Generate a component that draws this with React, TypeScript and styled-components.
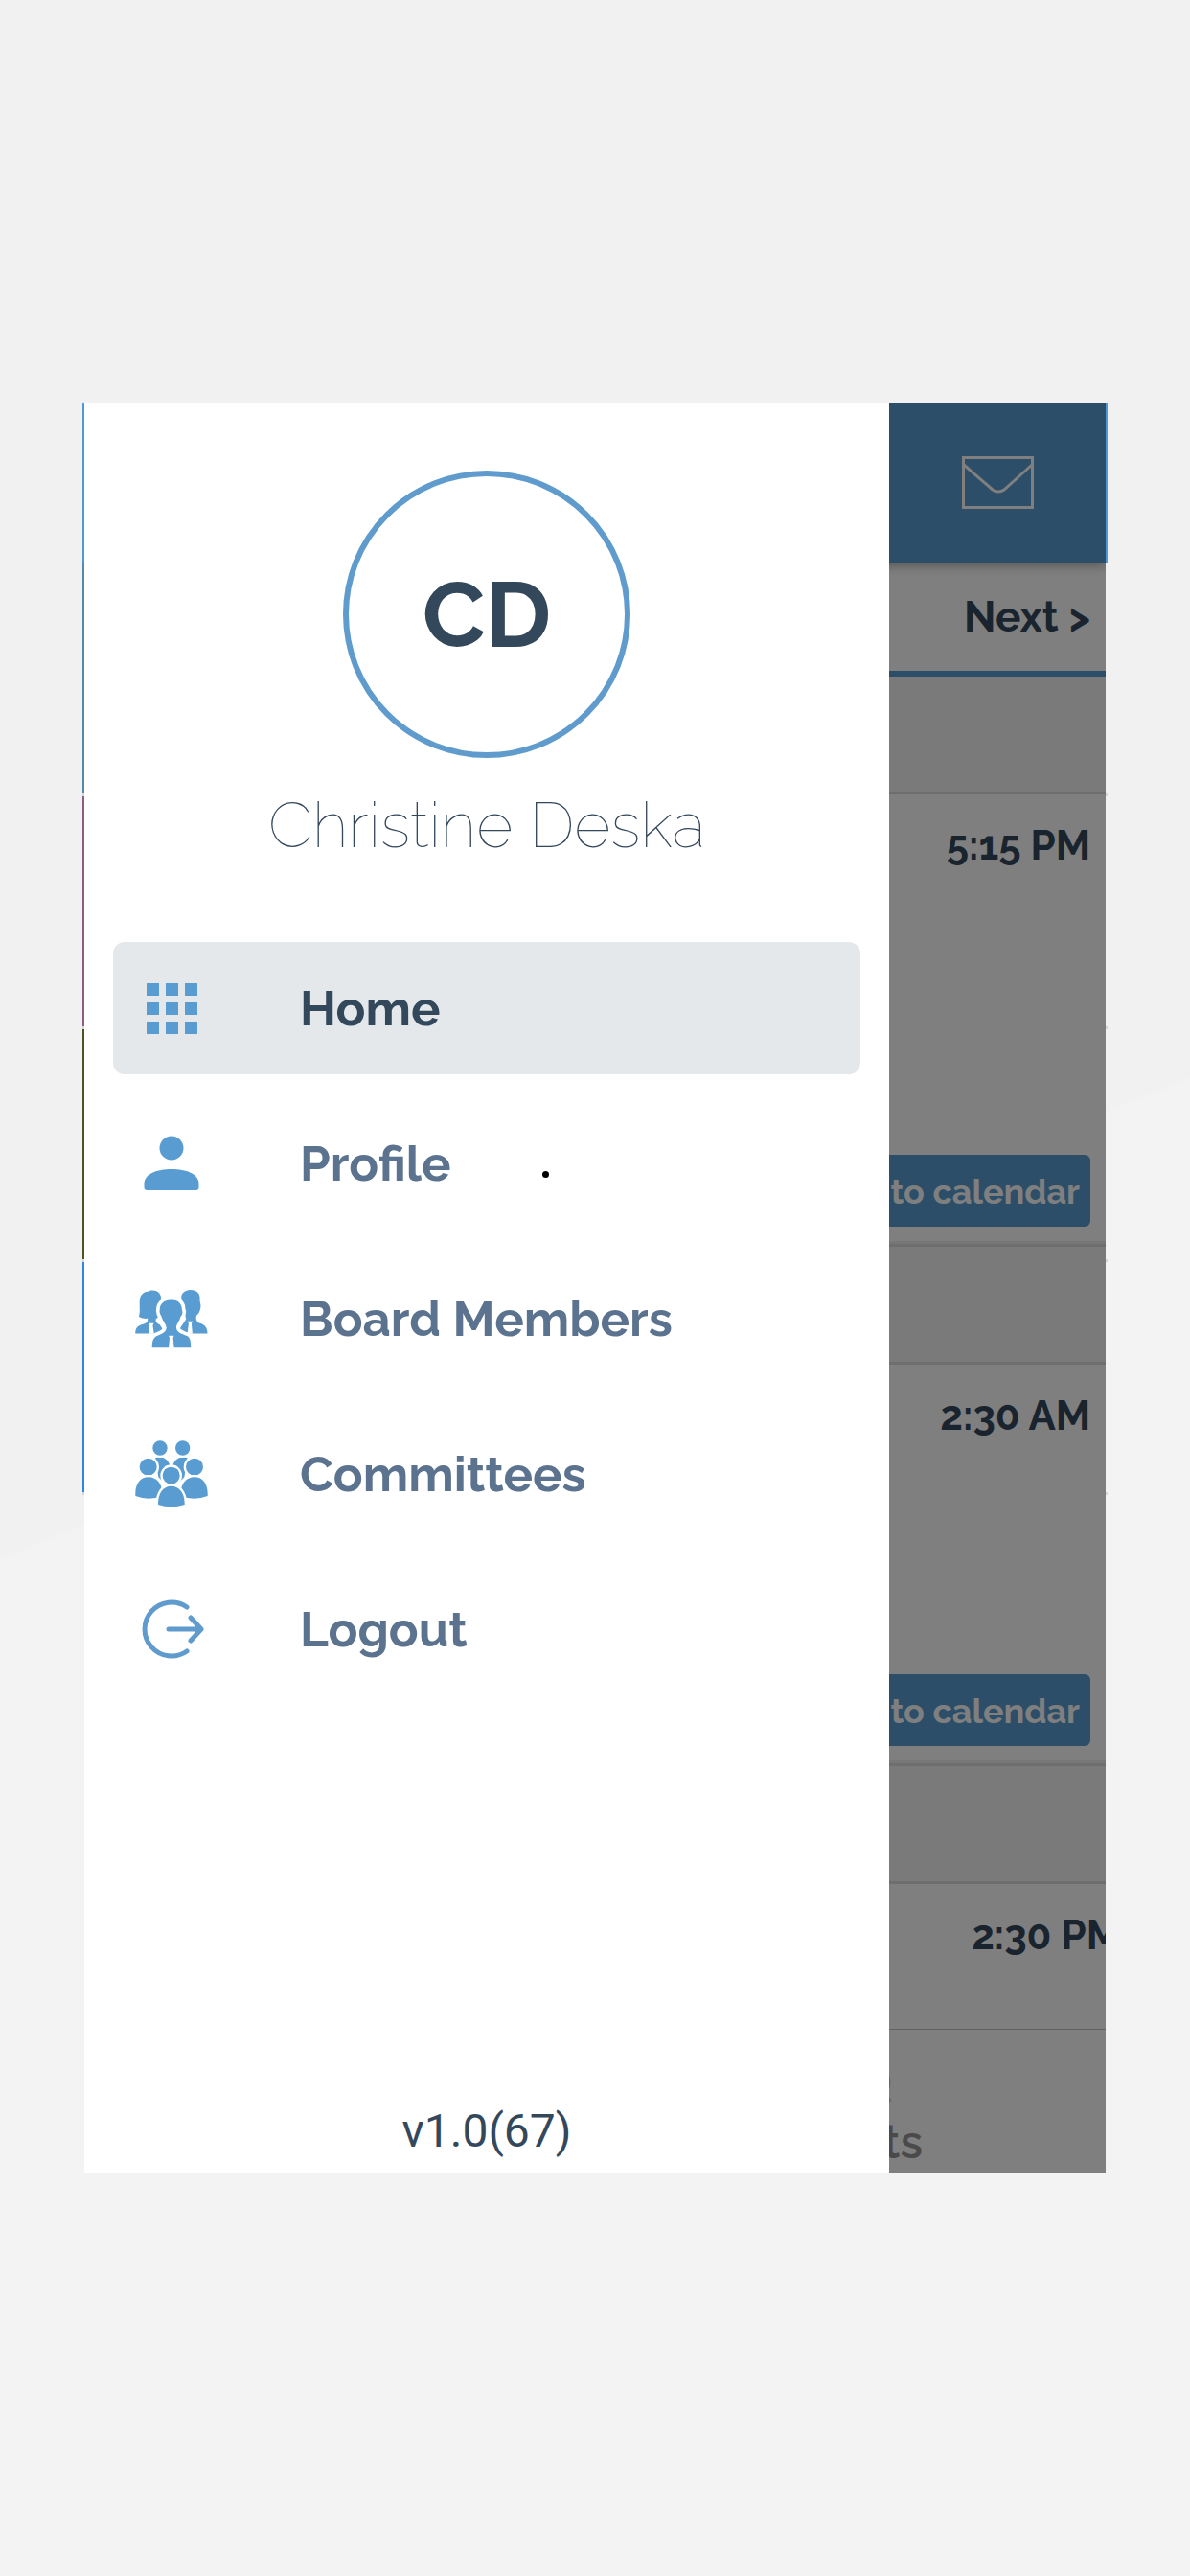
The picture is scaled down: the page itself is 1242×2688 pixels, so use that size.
import React from 'react';
import styled, { createGlobalStyle } from 'styled-components';

const blue = '#589cd2';
const ink = '#34485c';
const slate = '#5b738e';

const GlobalStyle = createGlobalStyle`
  *, *::before, *::after { box-sizing: border-box; }
  body {
    margin: 0;
    background: #f1f1f1;
    font-family: Raleway, Lato, "Open Sans", sans-serif;
    color: ${ink};
  }
  button { font-family: inherit; border: 0; cursor: pointer; }
`;

const Page = styled.main`
  min-height: 100vh;
  padding: 420px 86px;
  background: linear-gradient(158deg, #f1f1f1 51%, #f3f3f3 51%);
`;

const Stage = styled.div`
  position: relative;
  padding: 1px 2px 0;
`;

const Backdrop = styled.div`
  position: absolute;
  inset: 0;
`;

const BackdropHeader = styled.div`
  height: 168px;
  background: #4f99d6;
`;

const BackdropRow = styled.div<{ $accent: string }>`
  height: 243px;
  border-bottom: 3px solid #d4d6da;
  background: linear-gradient(${p => p.$accent}, ${p => p.$accent}) left / 2px 100% no-repeat;
`;

const Screen = styled.div`
  position: relative;
  overflow: hidden;
  background: #ffffff;
`;

const Header = styled.header`
  position: relative;
  display: flex;
  align-items: center;
  justify-content: flex-end;
  height: 166px;
  padding: 0 75px;
  background: ${blue};
  box-shadow: 0 2px 12px rgba(0, 0, 0, 0.4);
`;

const IconButton = styled.button`
  display: flex;
  padding: 0;
  background: none;
`;

const Pager = styled.div`
  display: flex;
  align-items: center;
  justify-content: flex-end;
  height: 119px;
  padding: 0 16px;
  border-bottom: 6px solid ${blue};
`;

const PagerButton = styled.button`
  padding: 0;
  background: none;
  color: ${ink};
  font-size: 44px;
  font-weight: 700;
  line-height: 56px;
`;

const DayBar = styled.div`
  height: 123px;
  background: #f4f4f4;
  border-bottom: 3px solid #dcdcdc;
`;

const EventCard = styled.article<{ $height: number; $wide?: boolean }>`
  display: flex;
  flex-direction: column;
  align-items: flex-end;
  justify-content: space-between;
  height: ${p => p.$height}px;
  margin-right: ${p => (p.$wide ? '-32px' : '0')};
  padding: 26px 16px 15px;
`;

const CardEdge = styled.div`
  height: 6px;
  border-top: 3px solid #efefef;
  border-bottom: 3px solid #dcdcdc;
`;

const EventTime = styled.time`
  font-size: 42px;
  font-weight: 700;
  line-height: 56px;
`;

const CalendarButton = styled.button`
  height: 75px;
  padding: 0 11px;
  border-radius: 6px;
  background: ${blue};
  color: #ffffff;
  font-size: 36px;
  font-weight: 700;
`;

const TabBar = styled.nav`
  display: flex;
  flex-direction: column;
  align-items: flex-end;
  justify-content: flex-end;
  height: 150px;
  padding: 0 191px 4px 0;
  border-top: 1px solid #c4c4c4;
`;

const Tab = styled.button`
  display: flex;
  flex-direction: column;
  align-items: center;
  gap: 10px;
  padding: 0;
  background: none;
  color: #949494;
  font-size: 48px;
  font-weight: 600;
  line-height: 56px;
  svg { margin-left: 44px; }
`;

const Scrim = styled.div`
  position: absolute;
  inset: 0;
  background: rgba(0, 0, 0, 0.5);
`;

const Drawer = styled.aside`
  position: absolute;
  inset: 0 auto 0 0;
  width: 78.8%;
  display: flex;
  flex-direction: column;
  align-items: center;
  padding: 70px 30px 15px;
  background: #ffffff;
`;

const Avatar = styled.div`
  display: grid;
  place-items: center;
  width: 300px;
  height: 300px;
  border: 6px solid #5f9bcc;
  border-radius: 50%;
  font-size: 96px;
  font-weight: 700;
`;

const UserName = styled.h1`
  margin: 30px 0 82px;
  font-size: 66px;
  font-weight: 100;
  line-height: 80px;
`;

const Menu = styled.nav`
  display: flex;
  flex-direction: column;
  gap: 24px;
  width: 100%;
`;

const MenuItem = styled.a<{ $active?: boolean }>`
  position: relative;
  display: flex;
  align-items: center;
  gap: 96px;
  height: 138px;
  padding: 0 23px;
  border-radius: 12px;
  background: ${p => (p.$active ? '#e4e8eb' : 'transparent')};
  color: ${p => (p.$active ? ink : slate)};
  font-size: 51px;
  font-weight: 700;
  text-decoration: none;
`;

const IconSlot = styled.span`
  display: flex;
  justify-content: center;
  width: 76px;
  color: ${blue};
`;

const Dot = styled.span`
  position: absolute;
  left: 448px;
  top: 77px;
  width: 7px;
  height: 7px;
  border-radius: 50%;
  background: #000000;
`;

const Version = styled.footer`
  margin-top: auto;
  font-family: Roboto, sans-serif;
  font-size: 48px;
  line-height: 56px;
`;

const GridIcon = () => (
  <svg width="54" height="54" viewBox="0 0 54 54" fill="currentColor" aria-hidden="true">
    {[1, 21, 41].map(y => [1, 21, 41].map(x => <rect key={`${x}-${y}`} x={x} y={y} width="13" height="13" />))}
  </svg>
);

const PersonIcon = () => (
  <svg width="58" height="58" viewBox="0 0 58 58" fill="currentColor" aria-hidden="true">
    <circle cx="29" cy="13" r="12.5" />
    <path d="M.5 50C.5 40 14 35 29 35s28.500 5 28.500 15v4q0 3-3 3H3.500q-3 0-3-3z" />
  </svg>
);

const BoardIcon = () => (
  <svg width="76" height="61" viewBox="35 33 228 184" fill="currentColor" aria-hidden="true">
    <path d="M46 117C52 100 46 78 50 58 54 44 66 37 76 38 84 31 104 34 111 44 119 56 117 68 112 80L106 120 100 124C97 132 104 140 112 142L130 170H35C35 152 44 145 60 141 70 138 75 134 74 123 62 124 50 121 46 117Z" />
    <path d="M180 60C178 44 192 33 208 33 230 33 241 46 238 66L241 82C240 98 236 106 228 113 224 124 228 134 238 138 252 142 262 150 262 170H165L195 125Z" />
    <path d="M76 138h17l-3 7 4 26H78l2-26zM200 132h16l-4 7 3 32h-16l4-32z" fill="#fff" />
    <path
      d="M112 95C112 76 128 64 147 65 166 62 182 74 182 96 186 104 182 112 177 118 174 132 164 140 164 152 166 170 186 172 198 178 208 184 210 196 210 215H88C88 196 90 186 100 179 112 172 132 170 133 152 132 140 121 130 118 118 112 108 110 102 112 95Z"
      stroke="#fff"
      strokeWidth="22"
      paintOrder="stroke"
    />
    <path d="M140 177h17l-3 7 3 33h-17l3-33z" fill="#fff" />
  </svg>
);

const CommitteeIcon = () => (
  <svg width="76" height="70" viewBox="35 505 228 210" fill="currentColor" stroke="#fff" strokeWidth="14" paintOrder="stroke" aria-hidden="true">
    <path d="M98 560C118 553 142 562 145 590L128 640 108 620ZM199 560C179 553 155 562 152 590L169 640 189 620Z" strokeWidth="0" />
    <circle cx="113" cy="529" r="23" />
    <circle cx="184" cy="529" r="23" />
    <circle cx="76" cy="588" r="27" />
    <circle cx="221" cy="588" r="27" />
    <path d="M36 679C34 640 52 620 77 620S122 640 120 679Q78 695 36 679ZM262 679C264 640 246 620 221 620S176 640 178 679Q220 695 262 679Z" />
    <circle cx="148" cy="615" r="27" />
    <path d="M107 706C106 668 124 648 148 648S191 668 190 706Q148 720 107 706Z" />
  </svg>
);

const LogoutIcon = () => (
  <svg width="76" height="62" viewBox="0 0 76 62" fill="none" stroke="#5f9bcc" strokeWidth="5" strokeLinecap="round" strokeLinejoin="round" aria-hidden="true">
    <path d="M54 8A28 28 0 1 0 54 54M35 31H69M58 19 69 31 58 43" />
  </svg>
);

const MailIcon = () => (
  <svg width="76" height="56" viewBox="0 0 76 56" fill="none" stroke="#fff" strokeWidth="3" aria-hidden="true">
    <rect x="2.500" y="1.500" width="72" height="52" />
    <path d="M3 9 33 35Q39 39 45 35L74 9" />
  </svg>
);

const TabIcon = () => (
  <svg width="44" height="44" viewBox="0 0 44 44" fill="none" stroke="#d0d0d0" strokeWidth="5" aria-hidden="true">
    <circle cx="22" cy="20" r="18" />
    <path d="M34 32 42 40" />
  </svg>
);

const menu = [
  { label: 'Home', icon: <GridIcon />, active: true },
  { label: 'Profile', icon: <PersonIcon />, dot: true },
  { label: 'Board Members', icon: <BoardIcon /> },
  { label: 'Committees', icon: <CommitteeIcon /> },
  { label: 'Logout', icon: <LogoutIcon /> },
];

export default function App() {
  return (
    <Page>
      <GlobalStyle />
      <Stage>
        <Backdrop>
          <BackdropHeader />
          {['#5489a8', '#8a5c86', '#4b5426', '#2f86dc'].map(accent => (
            <BackdropRow key={accent} $accent={accent} />
          ))}
        </Backdrop>
        <Screen>
          <Header>
            <IconButton aria-label="Messages"><MailIcon /></IconButton>
          </Header>
          <Pager><PagerButton>Next &gt;</PagerButton></Pager>
          <DayBar />
          <EventCard $height={466}>
            <EventTime>5:15 PM</EventTime>
            <CalendarButton>Add to calendar</CalendarButton>
          </EventCard>
          <CardEdge />
          <DayBar />
          <EventCard $height={413}>
            <EventTime>2:30 AM</EventTime>
            <CalendarButton>Add to calendar</CalendarButton>
          </EventCard>
          <CardEdge />
          <DayBar />
          <EventCard $height={151} $wide>
            <EventTime>2:30 PM</EventTime>
          </EventCard>
          <TabBar><Tab><TabIcon />Events</Tab></TabBar>
          <Scrim />
          <Drawer>
            <Avatar>CD</Avatar>
            <UserName>Christine Deska</UserName>
            <Menu>
              {menu.map(item => (
                <MenuItem key={item.label} href="#" $active={item.active}>
                  <IconSlot>{item.icon}</IconSlot>
                  {item.label}
                  {item.dot && <Dot />}
                </MenuItem>
              ))}
            </Menu>
            <Version>v1.0(67)</Version>
          </Drawer>
        </Screen>
      </Stage>
    </Page>
  );
}
